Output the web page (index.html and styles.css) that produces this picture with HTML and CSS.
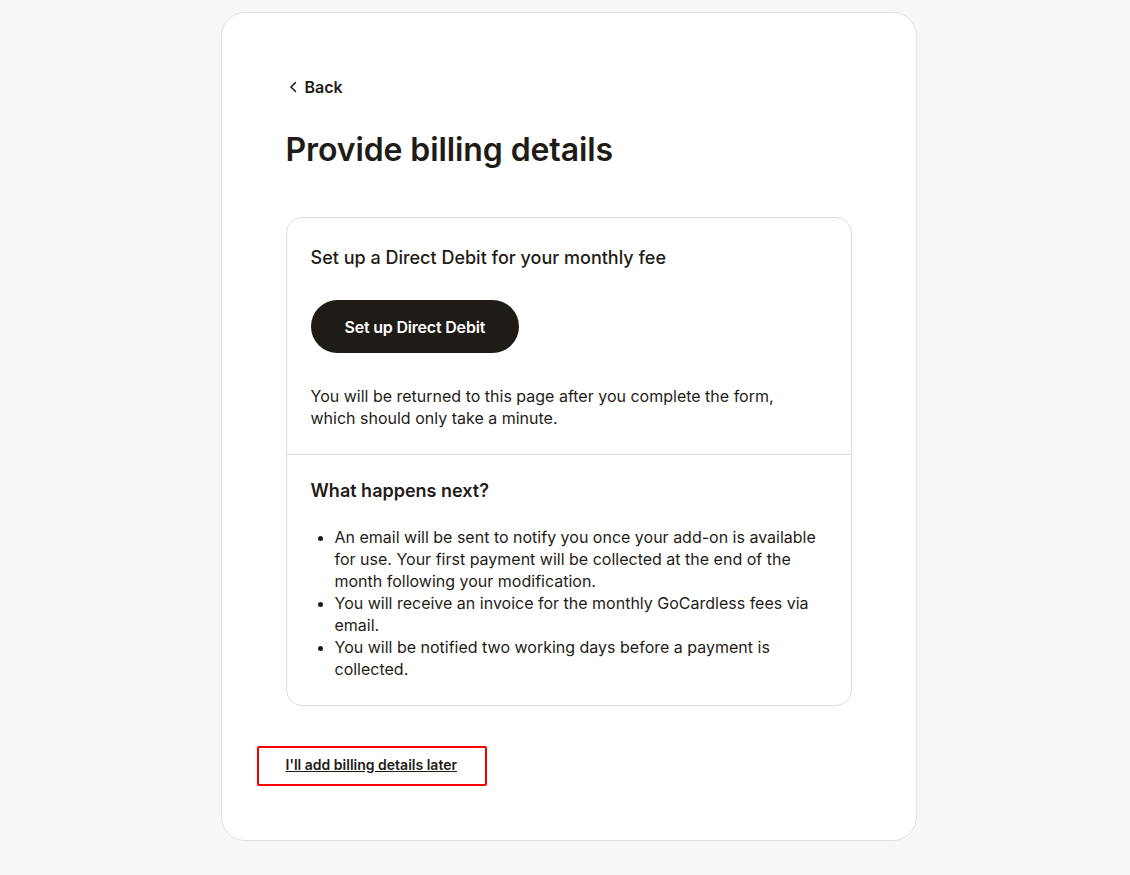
FILE: index.html
```html
<!DOCTYPE html>
<html lang="en">
<head>
  <meta charset="UTF-8" />
  <title>Provide billing details</title>
  <link rel="stylesheet" href="styles.css">
</head>
<body>
  <div class="page">
    <main class="panel">
      <a class="back" href="#">
        <svg width="16" height="16" viewBox="0 0 16 16" fill="none">
          <path d="M9.5 3.5 5 8l4.5 4.5" stroke="#1f1c18" stroke-width="1.5" stroke-linecap="round" stroke-linejoin="round"/>
        </svg>
        Back
      </a>

      <h1>Provide billing details</h1>

      <section class="box">
        <div class="box-part">
          <h2>Set up a Direct Debit for your monthly fee</h2>
          <button class="btn">Set up Direct Debit</button>
          <p>You will be returned to this page after you complete the form, which should only take a minute.</p>
        </div>
        <div class="box-part">
          <h3>What happens next?</h3>
          <ul>
            <li>An email will be sent to notify you once your add-on is available for use. Your first payment will be collected at the end of the month following your modification.</li>
            <li>You will receive an invoice for the monthly GoCardless fees via email.</li>
            <li>You will be notified two working days before a payment is collected.</li>
          </ul>
        </div>
      </section>

      <div class="later">
        <a href="#">I'll add billing details later</a>
      </div>
    </main>
  </div>
</body>
</html>
```

FILE: styles.css
```css
body {
  margin: 0;
  background: #f8f7f5;
  font-family: Inter, "Noto Sans", sans-serif;
  color: #1f1c18;
}

.page {
  display: flex;
  justify-content: center;
  padding: 12px 0 0 7px;
}

.panel {
  width: 566px;
  background: #fff;
  border: 1px solid #e2e0db;
  border-radius: 24px;
  padding: 64px 64px 54px;
}

.back {
  display: flex;
  align-items: center;
  gap: 3px;
  height: 20px;
  font-size: 16px;
  font-weight: 600;
  color: #1f1c18;
  text-decoration: none;
}

h1 {
  margin: 33px 0 47px;
  font-size: 32px;
  line-height: 40px;
  font-weight: 600;
  letter-spacing: -0.1px;
}

.box {
  border: 1px solid #dfddd9;
  border-radius: 16px;
}

.box-part {
  padding: 24px 24px 25px;
}

.box-part + .box-part {
  border-top: 1px solid #dfddd9;
}

h2 {
  margin: 0 0 26px;
  font-size: 18px;
  line-height: 32px;
  font-weight: 500;
}

.btn {
  display: block;
  height: 53px;
  padding: 0 34px;
  border: none;
  border-radius: 27px;
  background: #1f1c18;
  color: #fff;
  font-family: inherit;
  font-size: 16px;
  font-weight: 600;
  letter-spacing: -0.2px;
  cursor: pointer;
}

p {
  max-width: 480px;
  margin: 32px 0 0;
  font-size: 16px;
  line-height: 22px;
}

h3 {
  margin: 0;
  font-size: 18px;
  line-height: 24px;
  font-weight: 600;
}

ul {
  margin: 23px 0 0;
  padding-left: 24px;
  font-size: 16px;
  line-height: 22px;
}

.later {
  display: inline-block;
  margin: 40px 0 0 -29px;
  padding: 6px 28px 10px 27px;
  border: 2px solid #f00;
  border-radius: 2px;
}

.later a {
  font-size: 14px;
  line-height: 19px;
  font-weight: 600;
  color: #1f1c18;
}
```
